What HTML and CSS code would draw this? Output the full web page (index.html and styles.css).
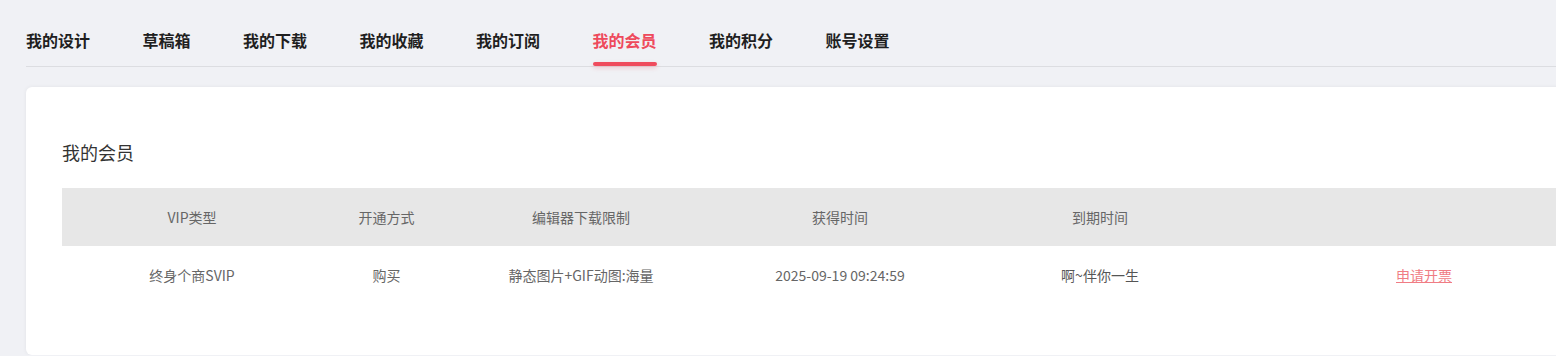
FILE: index.html
```html
<!DOCTYPE html>
<html>
<head lang="zh-CN">
    <meta charset="UTF-8">
    <title>我的会员</title>
    <link rel="stylesheet" href="styles.css">
</head>
<body>
<div class="page">
    <div class="user-nav">
        <a href="javascript:void(0);" class="nav-item">我的设计</a>
        <a href="javascript:void(0);" class="nav-item">草稿箱</a>
        <a href="javascript:void(0);" class="nav-item">我的下载</a>
        <a href="javascript:void(0);" class="nav-item">我的收藏</a>
        <a href="javascript:void(0);" class="nav-item">我的订阅</a>
        <a href="javascript:void(0);" class="nav-item active">我的会员</a>
        <a href="javascript:void(0);" class="nav-item">我的积分</a>
        <a href="javascript:void(0);" class="nav-item">账号设置</a>
    </div>
    <div class="vip-card">
        <div class="vip-title">我的会员</div>
        <div class="vip-table">
            <div class="vip-row vip-head">
                <div class="cell">VIP类型</div>
                <div class="cell">开通方式</div>
                <div class="cell">编辑器下载限制</div>
                <div class="cell">获得时间</div>
                <div class="cell">到期时间</div>
                <div class="cell"></div>
            </div>
            <div class="vip-row">
                <div class="cell">终身个商SVIP</div>
                <div class="cell">购买</div>
                <div class="cell">静态图片+GIF动图:海量</div>
                <div class="cell">2025-09-19 09:24:59</div>
                <div class="cell cell-dark">啊~伴你一生</div>
                <div class="cell"><a href="javascript:void(0);" class="invoice-link">申请开票</a></div>
            </div>
        </div>
    </div>
</div>
</body>
</html>
```

FILE: styles.css
```css
html, body {
    margin: 0;
    padding: 0;
    overflow: hidden;
}
body {
    background: #f0f1f5;
    font-family: "Noto Sans CJK SC", "Noto Sans", sans-serif;
    color: #333333;
}
a {
    text-decoration: none;
}
.page {
    width: 1627px;
    padding-left: 26px;
}
.user-nav {
    display: flex;
    gap: 52.5px;
    padding-top: 28px;
    border-bottom: 1px solid #dcdde1;
}
.nav-item {
    display: flex;
    flex-direction: column;
    font-size: 16px;
    font-weight: bold;
    line-height: 24px;
    color: #1f1f1f;
}
.nav-item::after {
    content: "";
    display: block;
    height: 4px;
    margin-top: 10px;
    border-radius: 2px;
}
.nav-item.active {
    color: #ee4a5c;
}
.nav-item.active::after {
    background: #ef4a5c;
    box-shadow: 0px 2px 4px rgba(239, 74, 92, 0.25);
}
.vip-card {
    margin-top: 20px;
    background: #ffffff;
    border-radius: 6px;
    box-shadow: 0px 0px 4px rgba(0, 0, 0, 0.06);
    padding: 52px 36px 51px 36px;
}
.vip-title {
    font-size: 18px;
    line-height: 26px;
    color: #333333;
    margin-bottom: 23px;
}
.vip-row {
    display: grid;
    grid-template-columns: 260px 129px 260px 258px 262px 386px;
    height: 58px;
    align-items: center;
    font-size: 14px;
    line-height: 20px;
    color: #666666;
}
.vip-head {
    background: #e7e7e7;
}
.cell {
    text-align: center;
}
.cell-dark {
    color: #555555;
}
.invoice-link {
    color: #f07c84;
    text-decoration: underline;
}
```
